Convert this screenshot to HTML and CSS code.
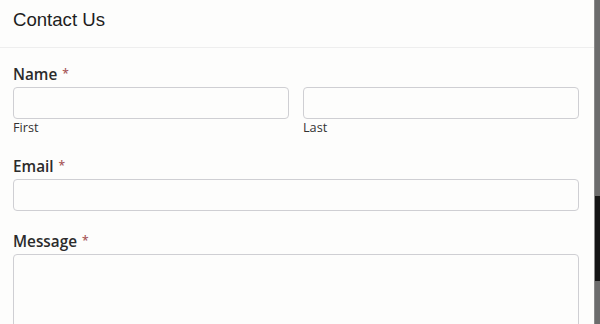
FILE: index.html
```html
<!DOCTYPE html>
<html lang="en">
<head>
<meta charset="utf-8">
<title>Contact Us</title>
<link rel="stylesheet" href="styles.css">
</head>
<body>
<div class="page">
  <div class="panel">
    <div class="header"><h1 class="title">Contact Us</h1></div>
    <form class="form">
      <div class="field">
        <label class="label">Name <span class="req">*</span></label>
        <div class="name-row">
          <div class="sub">
            <input class="input" type="text">
            <span class="sublabel">First</span>
          </div>
          <div class="sub">
            <input class="input" type="text">
            <span class="sublabel">Last</span>
          </div>
        </div>
      </div>
      <div class="field">
        <label class="label">Email <span class="req">*</span></label>
        <input class="input" type="email">
      </div>
      <div class="field">
        <label class="label">Message <span class="req">*</span></label>
        <textarea class="textarea"></textarea>
      </div>
    </form>
  </div>
  <div class="scrollbar">
    <div class="track-top"></div>
    <div class="thumb"></div>
    <div class="track-bottom"></div>
  </div>
</div>
</body>
</html>
```
FILE: styles.css
```css
html, body {
  margin: 0;
  padding: 0;
  height: 100%;
  overflow: hidden;
  background: #fdfdfc;
}
.page {
  display: flex;
  height: 324px;
}
.panel {
  width: 594px;
  background: #fdfdfc;
  overflow: hidden;
}
.header {
  box-sizing: border-box;
  height: 48px;
  padding: 9px 13px 0;
  border-bottom: 1px solid #eeeeee;
}
.title {
  margin: 0;
  font-family: "Liberation Sans", Arial, sans-serif;
  font-weight: 400;
  font-size: 18.6px;
  line-height: 22px;
  color: #1e1e1e;
}
.form {
  padding: 15px 15px 0 13px;
  font-family: "Open Sans", "Noto Sans", sans-serif;
}
.field {
  margin-bottom: 19px;
}
.label {
  display: block;
  font-size: 15.3px;
  font-weight: 600;
  line-height: 22px;
  color: #2b2b2b;
  margin-bottom: 2px;
}
.req {
  color: #a8585a;
  font-size: 12px;
  vertical-align: 2px;
  margin-left: 1px;
}
.name-row {
  display: flex;
  gap: 14px;
}
.sub {
  flex: 1;
  display: flex;
  flex-direction: column;
}
.input, .textarea {
  display: block;
  box-sizing: border-box;
  width: 100%;
  height: 32px;
  margin: 0;
  border: 1px solid #cfcfd3;
  border-radius: 4px;
  background: #fdfdfc;
  font: inherit;
}
.textarea {
  height: 100px;
  resize: none;
}
.sublabel {
  font-size: 12.7px;
  line-height: 17px;
  color: #333;
}
.scrollbar {
  width: 6px;
  display: flex;
  flex-direction: column;
  border-left: 1px solid #8a8a8a;
  box-sizing: border-box;
}
.track-top {
  height: 196px;
  background: #6c6c6c;
}
.thumb {
  height: 85px;
  background: #151515;
}
.track-bottom {
  flex: 1;
  background: #6c6c6c;
}
```
